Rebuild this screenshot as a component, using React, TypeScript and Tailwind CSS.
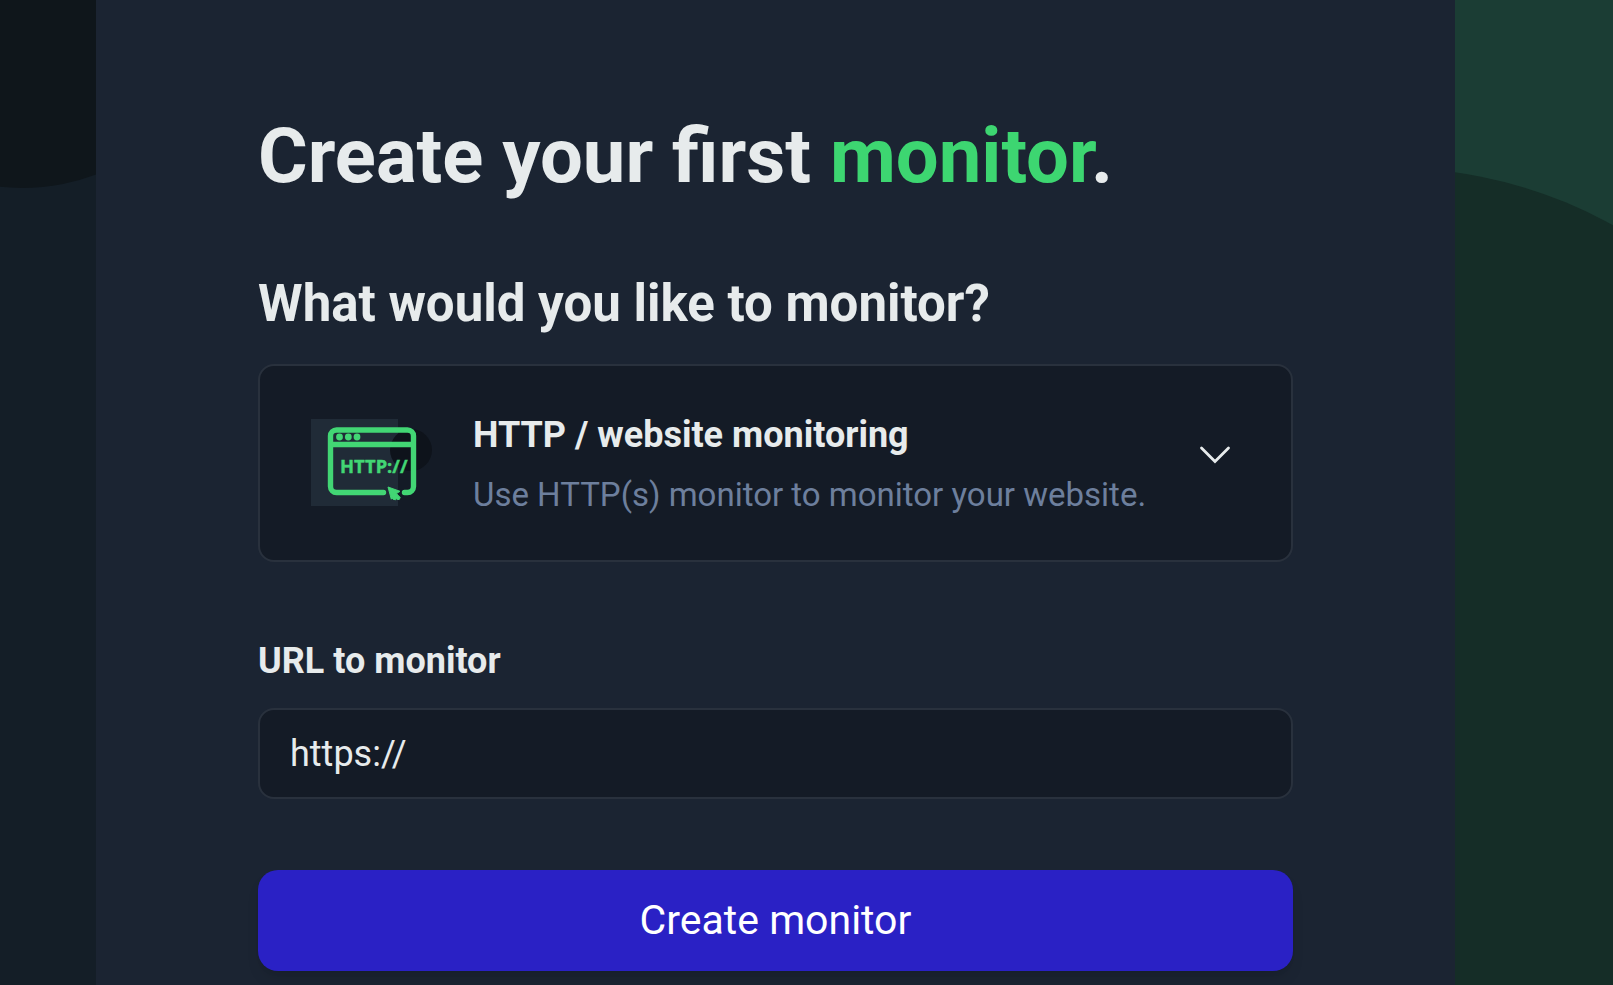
import { useState } from "react";

function HttpIcon() {
  return (
    <svg viewBox="0 0 124 88" className="h-[88px] w-[124px] shrink-0" aria-hidden="true">
      <rect width="87" height="87" fill="#202b37" />
      <circle cx="100" cy="31" r="21" fill="#0e131b" />
      <path
        d="M72.5 73.500H25.500a6 6 0 0 1-6-6V17a6 6 0 0 1 6-6H96.500a6 6 0 0 1 6 6V67.500a6 6 0 0 1-6 6H93.500M19.500 25.500H102.500"
        fill="none"
        stroke="#42d674"
        strokeWidth="5.4"
        strokeLinecap="round"
      />
      <circle cx="28.500" cy="18" r="3.400" fill="#42d674" />
      <circle cx="37.300" cy="18" r="3.400" fill="#42d674" />
      <circle cx="46" cy="18" r="3.400" fill="#42d674" />
      <path
        d="M77 68l12 4.300-3.600 2.300 3.800 3.800-1 2.200-2.400-.4-.6-1-.6 1.600-2.600-.6-.8-1.400-.9 1.400z"
        fill="#42d674"
        stroke="#42d674"
        strokeWidth="1"
        strokeLinejoin="round"
      />
      <text
        x="29"
        y="54"
        fill="#42d674"
        stroke="#42d674"
        strokeWidth="0.4"
        fontFamily="Noto Sans, sans-serif"
        fontWeight="700"
        fontSize="18.4"
      >
        HTTP://
      </text>
    </svg>
  );
}

function Chevron() {
  return (
    <svg viewBox="0 0 32 20" className="mb-4 h-5 w-8 shrink-0" aria-hidden="true">
      <path d="M2.500 3L16 16.500 29.500 3" fill="none" stroke="#e7ebec" strokeWidth="2.800" strokeLinecap="round" />
    </svg>
  );
}

export default function App() {
  const [url, setUrl] = useState("https://");

  return (
    <div className="flex min-h-screen bg-[#1b2432] font-[Roboto,sans-serif] text-[#e7ebec]">
      <div className="relative w-24 shrink-0 overflow-hidden bg-[#141e27]">
        <div className="absolute -top-[232px] -left-[188px] size-[420px] rounded-full bg-[#0f161b]" />
      </div>

      <main className="min-w-0 flex-1 px-[162px] pt-[116px]">
        <h1 className="text-[76px] leading-[80px] font-bold">
          Create your first <span className="text-[#3dd671]">monitor</span>.
        </h1>

        <form onSubmit={(e) => e.preventDefault()}>
          <h2 id="type-label" className="mt-[78px] text-[51px] leading-[60px] font-bold">
            What would you like to monitor?
          </h2>
          <button
            type="button"
            aria-haspopup="listbox"
            aria-labelledby="type-label type-value"
            className="mt-[30px] flex min-h-[198px] w-full items-center rounded-2xl border-2 border-[#29313d] bg-[#141b26] pr-[60px] pl-[51px] text-left"
          >
            <HttpIcon />
            <span className="ml-[38px] flex flex-1 flex-col gap-4 pt-1">
              <span id="type-value" className="text-[36px] leading-[44px] font-bold">
                HTTP / website monitoring
              </span>
              <span className="text-[33px] leading-[44px] text-[#6d7f9d]">
                Use HTTP(s) monitor to monitor your website.
              </span>
            </span>
            <Chevron />
          </button>

          <label htmlFor="url" className="mt-[77px] block text-[36px] leading-[44px] font-bold">
            URL to monitor
          </label>
          <input
            id="url"
            type="text"
            value={url}
            onChange={(e) => setUrl(e.target.value)}
            className="mt-[25px] block h-[91px] w-full rounded-2xl border-2 border-[#29313d] bg-[#141b26] px-[30px] text-[36px] outline-none"
          />

          <button
            type="submit"
            className="mt-[71px] block h-[101px] w-full rounded-[20px] bg-[#2a21c5] text-[41px] text-white shadow-lg"
          >
            Create monitor
          </button>
        </form>
      </main>

      <div className="relative w-[158px] shrink-0 overflow-hidden bg-[#1b3d34]">
        <div className="absolute top-[168px] -left-[513px] size-[902px] rounded-full bg-[#152d27]" />
      </div>
    </div>
  );
}
